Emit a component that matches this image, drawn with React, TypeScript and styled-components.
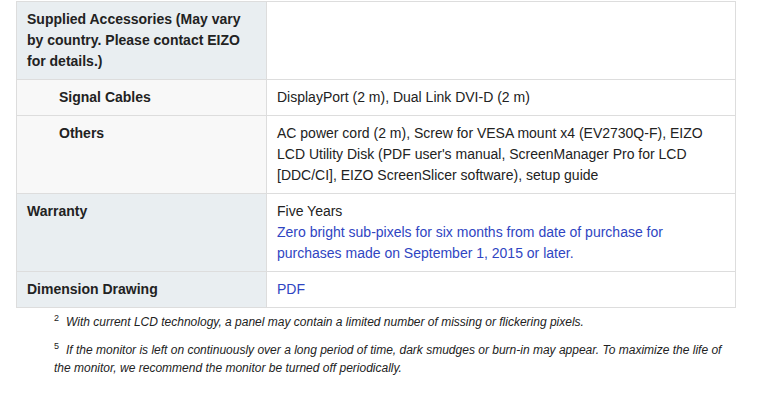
import React from "react";
import styled, { createGlobalStyle } from "styled-components";

const GlobalStyle = createGlobalStyle`
  html, body {
    margin: 0;
    padding: 0;
    background: #ffffff;
  }
  body {
    font-family: "Liberation Sans", Arial, sans-serif;
    color: #222222;
  }
`;

const Page = styled.div`
  width: 720px;
  padding: 1px 0 0 16px;
`;

const SpecTable = styled.table`
  width: 720px;
  table-layout: fixed;
  border-collapse: collapse;
  font-size: 14px;
  line-height: 21px;
`;

const HeadCell = styled.th<{ $sub?: boolean }>`
  text-align: left;
  vertical-align: top;
  font-weight: bold;
  color: #222222;
  background: ${(p) => (p.$sub ? "#f8f8f8" : "#e9eef1")};
  border: 1px solid #dddddd;
  padding: 7px 10px 7px ${(p) => (p.$sub ? "42px" : "10px")};
`;

const DataCell = styled.td`
  vertical-align: top;
  background: #ffffff;
  border: 1px solid #dddddd;
  padding: 7px 10px;
  color: #222222;
`;

const Line = styled.div``;

const LinkText = styled.a`
  color: #2f45c2;
  text-decoration: none;
`;

const Footnotes = styled.div`
  padding: 5px 10px 0 38px;
  font-size: 12px;
  line-height: 18px;
  font-style: italic;
  color: #222222;
`;

const Note = styled.p`
  margin: 0 0 10px 0;
`;

const Sup = styled.span`
  display: inline-block;
  font-size: 9px;
  line-height: 9px;
  height: 9px;
  vertical-align: top;
  margin-top: 1px;
  font-style: normal;
  margin-right: 7px;
`;

export default function App() {
  return (
    <>
      <GlobalStyle />
      <Page>
        <SpecTable>
          <colgroup>
            <col style={{ width: "250px" }} />
            <col />
          </colgroup>
          <tbody>
            <tr>
              <HeadCell>
                Supplied Accessories (May vary by country. Please contact EIZO for details.)
              </HeadCell>
              <DataCell />
            </tr>
            <tr>
              <HeadCell $sub>Signal Cables</HeadCell>
              <DataCell>DisplayPort (2 m), Dual Link DVI-D (2 m)</DataCell>
            </tr>
            <tr>
              <HeadCell $sub>Others</HeadCell>
              <DataCell>
                AC power cord (2 m), Screw for VESA mount x4 (EV2730Q-F), EIZO LCD Utility Disk (PDF
                user's manual, ScreenManager Pro for LCD [DDC/CI], EIZO ScreenSlicer software), setup
                guide
              </DataCell>
            </tr>
            <tr>
              <HeadCell>Warranty</HeadCell>
              <DataCell>
                <Line>Five Years</Line>
                <Line>
                  <LinkText href="#">
                    Zero bright sub-pixels for six months from date of purchase for purchases made on
                    September 1, 2015 or later.
                  </LinkText>
                </Line>
              </DataCell>
            </tr>
            <tr>
              <HeadCell>Dimension Drawing</HeadCell>
              <DataCell>
                <LinkText href="#">PDF</LinkText>
              </DataCell>
            </tr>
          </tbody>
        </SpecTable>
        <Footnotes>
          <Note>
            <Sup>2</Sup>With current LCD technology, a panel may contain a limited number of missing or
            flickering pixels.
          </Note>
          <Note>
            <Sup>5</Sup>If the monitor is left on continuously over a long period of time, dark smudges or
            burn-in may appear. To maximize the life of the monitor, we recommend the monitor be turned
            off periodically.
          </Note>
        </Footnotes>
      </Page>
    </>
  );
}
